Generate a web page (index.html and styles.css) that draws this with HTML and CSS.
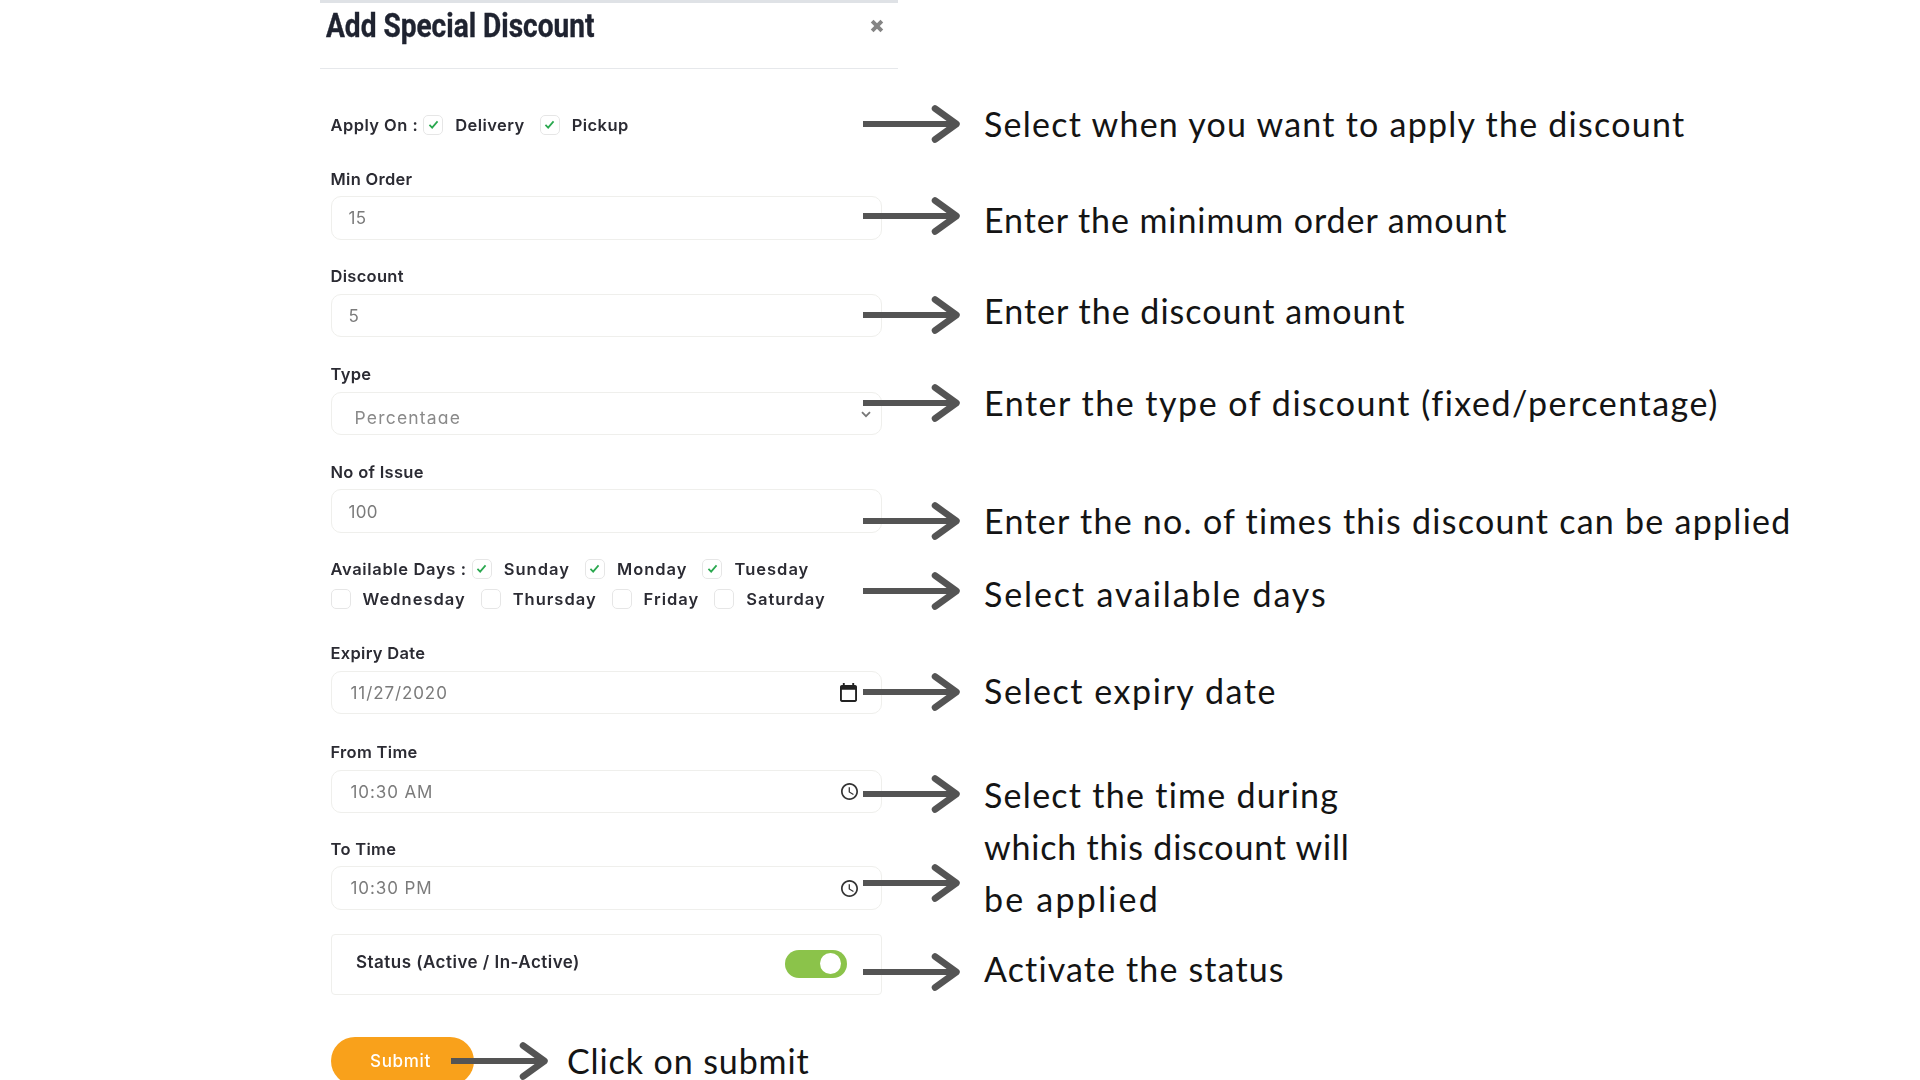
FILE: index.html
```html
<!DOCTYPE html>
<html lang="en">
<head>
<meta charset="utf-8">
<title>Add Special Discount</title>
<link rel="stylesheet" href="styles.css">
</head>
<body>
<svg class="defs" width="0" height="0" aria-hidden="true">
  <symbol id="arrow" viewBox="0 0 97 38"><rect x="0" y="16" width="92" height="6" fill="#545454"/><polyline points="72,3.5 93.5,19 72,34.5" fill="none" stroke="#545454" stroke-width="6.5" stroke-linecap="round" stroke-linejoin="round"/></symbol>
  <symbol id="tick" viewBox="0 0 12 10"><polyline points="1.5,5.5 4.5,8.5 10.5,1.5" fill="none" stroke="#2aa84f" stroke-width="1.9"/></symbol>
  <symbol id="clock" viewBox="2 2 20 20"><path fill="#333" d="M11.99 2C6.47 2 2 6.48 2 12s4.47 10 9.99 10C17.52 22 22 17.52 22 12S17.52 2 11.99 2zM12 20c-4.42 0-8-3.58-8-8s3.58-8 8-8 8 3.58 8 8-3.58 8-8 8zm.5-13H11v6l5.25 3.15.75-1.23-4.5-2.67z"/></symbol>
</svg>
<main class="page">
  <form class="form">
    <header class="head">
      <h1 class="title"><span class="title-text">Add Special Discount</span></h1>
      <svg class="close" viewBox="0 0 13 13" aria-label="Close"><path d="M2 2l9 9M11 2l-9 9" stroke="#858585" stroke-width="3.6" fill="none"/></svg>
    </header>
    <div class="body">
      <div class="checks apply">
        <span class="lead">Apply On :</span>
        <span class="check"><span class="box"><svg class="tick"><use href="#tick"/></svg></span>Delivery</span>
        <span class="check"><span class="box"><svg class="tick"><use href="#tick"/></svg></span>Pickup</span>
      </div>
      <div class="field first">
        <label class="label">Min Order</label>
        <div class="input"><span class="value">15</span></div>
      </div>
      <div class="field">
        <label class="label">Discount</label>
        <div class="input"><span class="value">5</span></div>
      </div>
      <div class="field">
        <label class="label">Type</label>
        <div class="input select"><span class="value picked">Percentage</span><svg class="chevron" viewBox="0 0 10 7"><polyline points="1,1.2 5,5.2 9,1.2" fill="none" stroke="#777" stroke-width="1.8"/></svg></div>
      </div>
      <div class="field">
        <label class="label">No of Issue</label>
        <div class="input"><span class="value">100</span></div>
      </div>
      <div class="checks days">
        <span class="lead">Available Days :</span>
        <span class="check"><span class="box"><svg class="tick"><use href="#tick"/></svg></span>Sunday</span>
        <span class="check"><span class="box"><svg class="tick"><use href="#tick"/></svg></span>Monday</span>
        <span class="check"><span class="box"><svg class="tick"><use href="#tick"/></svg></span>Tuesday</span>
      </div>
      <div class="checks days second">
        <span class="check"><span class="box"></span>Wednesday</span>
        <span class="check"><span class="box"></span>Thursday</span>
        <span class="check"><span class="box"></span>Friday</span>
        <span class="check"><span class="box"></span>Saturday</span>
      </div>
      <div class="field after-days">
        <label class="label">Expiry Date</label>
        <div class="input"><span class="value wide">11/27/2020</span><svg class="cal" viewBox="3 1 18 20"><path fill="#222" d="M19 3h-1V1h-2v2H8V1H6v2H5c-1.11 0-1.99.9-1.99 2L3 19c0 1.1.89 2 2 2h14c1.1 0 2-.9 2-2V5c0-1.1-.9-2-2-2zm0 16H5V8h14v11z"/></svg></div>
      </div>
      <div class="field from">
        <label class="label">From Time</label>
        <div class="input"><span class="value wide">10:30 AM</span><svg class="clock"><use href="#clock"/></svg></div>
      </div>
      <div class="field">
        <label class="label">To Time</label>
        <div class="input"><span class="value wide">10:30 PM</span><svg class="clock"><use href="#clock"/></svg></div>
      </div>
      <div class="status">
        <span class="status-text">Status (Active / In-Active)</span>
        <span class="toggle"><span class="knob"></span></span>
      </div>
      <div class="submit-row">
        <button class="submit" type="button"><span class="submit-text">Submit</span></button>
        <svg class="arrow submit-arrow"><use href="#arrow"/></svg>
        <span class="note-text click">Click on submit</span>
      </div>
    </div>
  </form>
  <aside class="notes">
    <div class="note n1"><svg class="arrow"><use href="#arrow"/></svg><p class="note-text">Select when you want to apply the discount</p></div>
    <div class="note n2"><svg class="arrow"><use href="#arrow"/></svg><p class="note-text">Enter the minimum order amount</p></div>
    <div class="note n3"><svg class="arrow"><use href="#arrow"/></svg><p class="note-text">Enter the discount amount</p></div>
    <div class="note n4"><svg class="arrow"><use href="#arrow"/></svg><p class="note-text">Enter the type of discount (fixed/percentage)</p></div>
    <div class="note n5"><svg class="arrow"><use href="#arrow"/></svg><p class="note-text">Enter the no. of times this discount can be applied</p></div>
    <div class="note n6"><svg class="arrow"><use href="#arrow"/></svg><p class="note-text">Select available days</p></div>
    <div class="note n7"><svg class="arrow"><use href="#arrow"/></svg><p class="note-text">Select expiry date</p></div>
    <div class="note n8">
      <div class="arrow-stack"><svg class="arrow"><use href="#arrow"/></svg><svg class="arrow"><use href="#arrow"/></svg></div>
      <p class="note-text"><span class="line-a">Select the time during</span><br><span class="line-b">which this discount will</span><br><span class="line-c">be applied</span></p>
    </div>
    <div class="note n9"><svg class="arrow"><use href="#arrow"/></svg><p class="note-text">Activate the status</p></div>
  </aside>
</main>
</body>
</html>
```
FILE: styles.css
```css
* { box-sizing: border-box; }
html, body { margin: 0; height: 1080px; overflow: hidden; background: #fff; }
body { font-family: Inter, "Liberation Sans", sans-serif; color: #2b2b33; }
.defs { position: absolute; }

.page { display: flex; padding-left: 320px; height: 1080px; }

.form { width: 578px; flex: none; }
.head { display: flex; justify-content: space-between; align-items: flex-start; height: 69px; border-top: 3px solid #dfe2e6; border-bottom: 1.5px solid #e6e8eb; padding: 2px 14px 0 6px; }
.title { margin: 0; height: 40px; }
.title-text { display: inline-block; font: 700 34px/40px Roboto, sans-serif; color: #1f2330; transform: scaleX(.825); transform-origin: left center; white-space: nowrap; -webkit-text-stroke: .4px #1f2330; }
.close { width: 14px; height: 14px; margin-top: 14px; }

.body { padding: 45px 16px 0 10.5px; }
.checks { display: flex; align-items: center; height: 21px; font-size: 16.5px; font-weight: 600; letter-spacing: .45px; white-space: nowrap; }
.lead { margin-right: 5px; }
.check { display: flex; align-items: center; gap: 12px; margin-right: 15px; }
.box { width: 20px; height: 20px; border: 1.5px solid #e6e6e6; border-radius: 5px; display: flex; align-items: center; justify-content: center; flex: none; }
.tick { width: 11px; height: 9px; }

.field { margin-bottom: 25.3px; }
.field.first { margin-top: 32px; }
.label { display: block; font-size: 16.5px; font-weight: 600; line-height: 22px; margin-bottom: 6.5px; padding-top: .5px; letter-spacing: .3px; }
.input { height: 43.5px; border: 1.5px solid #efefec; border-radius: 10px; display: flex; align-items: center; justify-content: space-between; padding: 1px 17px 0 17px; }
.value { font-size: 17px; color: #7b7b7b; letter-spacing: .3px; }
.value.wide { margin-left: 2px; letter-spacing: .9px; }
.select { align-items: flex-start; padding-right: 10px; padding-top: 0; }
.value.picked { display: block; height: 17px; overflow: hidden; line-height: 21px; margin: 14px 0 0 6px; color: #8a8a8a; font-size: 17.5px; letter-spacing: 1.2px; }
.chevron { width: 10px; height: 7px; margin-top: 18px; }
.cal { width: 17px; height: 19px; margin-right: 7px; }
.clock { width: 17px; height: 17px; margin-right: 6px; }

.days { margin-top: 4px; letter-spacing: 1px; }
.days .lead { letter-spacing: .65px; }
.days.second { margin-top: 9.5px; }
.after-days { margin-top: 32px; margin-bottom: 26.5px; }
.from { margin-bottom: 24px; }

.status { height: 61px; margin-top: -1px; border: 1.5px solid #efefec; border-radius: 4px; display: flex; align-items: flex-start; justify-content: space-between; padding: 15px 34px 0 24.5px; }
.status-text { font-size: 17px; font-weight: 600; line-height: 24px; letter-spacing: .47px; }
.toggle { width: 62px; height: 28px; border-radius: 14px; background: #8bc34a; display: flex; align-items: center; justify-content: flex-end; padding-right: 6px; }
.knob { width: 21px; height: 21px; border-radius: 50%; background: #fff; }

.submit-row { display: flex; align-items: center; margin-top: 42px; }
.submit { width: 143px; height: 48px; border: 0; border-radius: 24px; background: #f9a11b; color: #fff; font: 500 17px Inter, sans-serif; letter-spacing: .7px; padding: 0 3px 0 0; flex: none; }
.submit-arrow { margin-left: -23px; margin-right: 19.5px; }

.title-text, .label, .value, .checks, .status-text, .submit-text { filter: blur(.3px); }

.arrow { width: 97px; height: 38px; display: block; flex: none; }
.notes { margin-left: -35px; padding-top: 105px; position: relative; }
.note { display: flex; gap: 24px; }
.note-text { margin: 0; font: 400 34px/44px Lato, sans-serif; color: #141414; white-space: nowrap; letter-spacing: 1.27px; }
.click { letter-spacing: .9px; }

.n1 { height: 92px; }
.n1 .note-text { margin-top: -3px; letter-spacing: 1.25px; }
.n2 { height: 99px; }
.n2 .note-text { margin-top: 1px; letter-spacing: .93px; }
.n3 { height: 88px; }
.n3 .note-text { margin-top: -7px; letter-spacing: 1.02px; }
.n4 { height: 118px; }
.n4 .note-text { margin-top: -3px; letter-spacing: 1.52px; }
.n5 { height: 70px; }
.n5 .note-text { margin-top: -3px; }
.n6 { height: 101px; }
.n6 .note-text { margin-top: 0; letter-spacing: 1.87px; }
.n7 { height: 102px; }
.n7 .note-text { margin-top: -4px; letter-spacing: 1.56px; }
.n8 { height: 178px; }
.n8 .note-text { margin-top: -6px; line-height: 52px; }
.line-b { letter-spacing: .8px; }
.line-c { letter-spacing: 2.2px; }
.arrow-stack { display: flex; flex-direction: column; gap: 51px; }
.n9 .note-text { margin-top: -6px; letter-spacing: 1.14px; }
```
